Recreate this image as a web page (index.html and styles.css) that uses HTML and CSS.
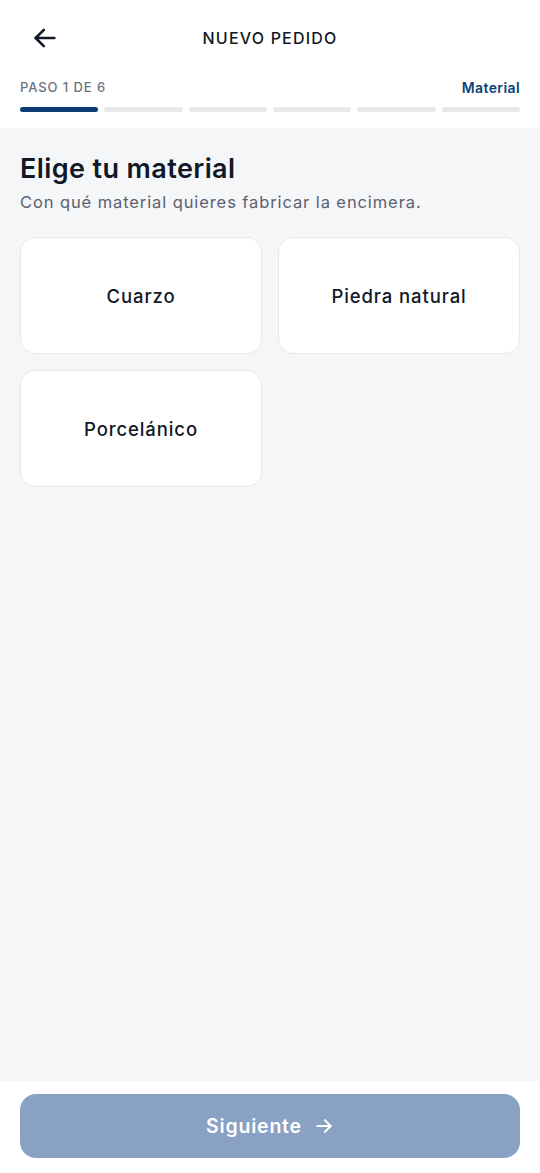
FILE: index.html
```
<!DOCTYPE html>
<html lang="es">
<head>
<meta charset="utf-8">
<title>Nuevo pedido</title>
<link rel="stylesheet" href="styles.css">
</head>
<body>
<div class="app">
  <header class="header">
    <div class="topbar">
      <button class="back" aria-label="Volver">
        <svg width="28" height="28" viewBox="0 0 24 24" fill="none" stroke="#111827" stroke-width="2.2" stroke-linecap="round" stroke-linejoin="round"><path d="M20 12H4"/><path d="M11 5l-7 7 7 7"/></svg>
      </button>
      <h1 class="title">NUEVO PEDIDO</h1>
      <span class="spacer"></span>
    </div>
    <div class="steprow">
      <span class="step">PASO 1 DE 6</span>
      <span class="stepname">Material</span>
    </div>
    <div class="progress">
      <span class="seg active"></span>
      <span class="seg"></span>
      <span class="seg"></span>
      <span class="seg"></span>
      <span class="seg"></span>
      <span class="seg"></span>
    </div>
  </header>
  <main class="main">
    <h2 class="heading">Elige tu material</h2>
    <p class="sub">Con qué material quieres fabricar la encimera.</p>
    <div class="grid">
      <button class="card">Cuarzo</button>
      <button class="card">Piedra natural</button>
      <button class="card">Porcelánico</button>
    </div>
  </main>
  <footer class="footer">
    <button class="next" disabled>Siguiente
      <svg width="20" height="20" viewBox="0 0 24 24" fill="none" stroke="#ffffff" stroke-width="2.4" stroke-linecap="round" stroke-linejoin="round"><path d="M4 12h16"/><path d="M13 5l7 7-7 7"/></svg>
    </button>
  </footer>
</div>
</body>
</html>
```
FILE: styles.css
```
* { box-sizing: border-box; }
html, body { margin: 0; padding: 0; height: 100%; }
body {
  font-family: Inter, "Open Sans", Arial, sans-serif;
  background: #f5f6f8;
  color: #111827;
}
.app {
  min-height: 1173px;
  display: flex;
  flex-direction: column;
}
.header {
  background: #ffffff;
  padding: 0 20px 16px;
}
.topbar {
  height: 76px;
  display: flex;
  align-items: center;
  justify-content: space-between;
}
.back {
  border: 0;
  background: none;
  padding: 0;
  margin-left: 11px;
  width: 28px;
  height: 28px;
  display: flex;
}
.spacer { width: 39px; }
.title {
  margin: 0;
  font-size: 16px;
  font-weight: 500;
  letter-spacing: 1.2px;
  color: #111827;
}
.steprow {
  display: flex;
  justify-content: space-between;
  align-items: center;
  height: 22px;
}
.step {
  font-size: 13px;
  font-weight: 500;
  letter-spacing: 0.9px;
  color: #6b7280;
}
.stepname {
  font-size: 14px;
  font-weight: 600;
  letter-spacing: 0.4px;
  color: #0b3f7a;
}
.progress {
  display: flex;
  gap: 6px;
  margin-top: 9px;
}
.seg {
  flex: 1;
  height: 5px;
  border-radius: 3px;
  background: #e7e8ea;
}
.seg.active { background: #0d3c75; }
.main {
  flex: 1;
  padding: 24px 20px 20px;
}
.heading {
  margin: 0;
  font-size: 27px;
  line-height: 34px;
  font-weight: 600;
  color: #111827;
  letter-spacing: 0.4px;
}
.sub {
  margin: 5px 0 0;
  font-size: 16.5px;
  line-height: 22px;
  letter-spacing: 0.9px;
  color: #5b6170;
}
.grid {
  margin-top: 24px;
  display: grid;
  grid-template-columns: 1fr 1fr;
  gap: 16px 16px;
}
.card {
  height: 117px;
  background: #ffffff;
  border: 1px solid #e6e8eb;
  border-radius: 15px;
  font-family: inherit;
  font-size: 18.5px;
  font-weight: 500;
  letter-spacing: 0.9px;
  color: #111827;
}
.footer {
  background: #ffffff;
  padding: 13px 20px 15px;
}
.next {
  width: 100%;
  height: 64px;
  border: 0;
  border-radius: 16px;
  background: #89a1c2;
  color: #ffffff;
  font-family: inherit;
  font-size: 19.5px;
  font-weight: 600;
  letter-spacing: 0.8px;
  display: flex;
  align-items: center;
  justify-content: center;
  gap: 12px;
}
```
